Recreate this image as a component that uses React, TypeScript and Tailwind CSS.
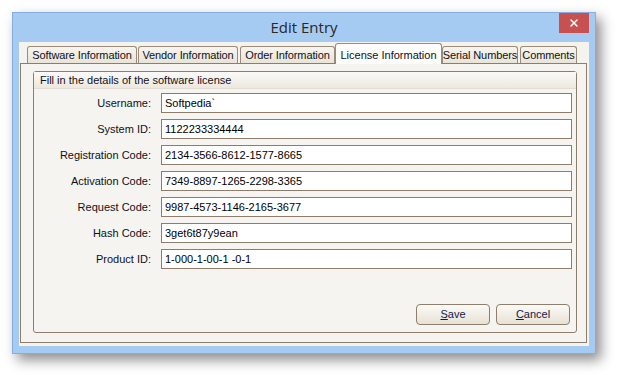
import { X } from "lucide-react";

const tabs = [
  { label: "Software Information", w: "w-[110px]", ml: "ml-[7px]" },
  { label: "Vendor Information", w: "w-[100px]", ml: "ml-px" },
  { label: "Order Information", w: "w-[95px]", ml: "ml-[2px]" },
  { label: "License Information", w: "w-[107px]", ml: "ml-0", active: true },
  { label: "Serial Numbers", w: "w-[76px]", ml: "ml-0" },
  { label: "Comments", w: "w-[57px]", ml: "ml-[2px]" },
];

const fields = [
  ["Username:", "Softpedia`"],
  ["System ID:", "1122233334444"],
  ["Registration Code:", "2134-3566-8612-1577-8665"],
  ["Activation Code:", "7349-8897-1265-2298-3365"],
  ["Request Code:", "9987-4573-1146-2165-3677"],
  ["Hash Code:", "3get6t87y9ean"],
  ["Product ID:", "1-000-1-00-1 -0-1"],
];

function Tab({ label, w, ml, active }: { label: string; w: string; ml: string; active?: boolean }) {
  if (active) {
    return (
      <div
        className={`${w} ${ml} relative z-10 -mb-px flex h-[21px] items-start justify-center whitespace-nowrap rounded-t-[3px] border border-b-0 border-[#9c8b78] bg-[#fcfcfb] pt-[3px] text-[11px] text-[#101020]`}
      >
        {label}
      </div>
    );
  }
  return (
    <div
      className={`${w} ${ml} flex h-[17px] items-center justify-center whitespace-nowrap rounded-t-[3px] border border-b-0 border-[#9c8b78] bg-gradient-to-b from-[#f7f5f0] to-[#e9e4d7] text-[11px] tracking-[-0.1px] text-[#101020]`}
    >
      {label}
    </div>
  );
}

function Button({ first, rest }: { first: string; rest: string }) {
  return (
    <button className="flex h-[21px] w-[74px] items-center justify-center rounded-[4px] border border-[#8f7e6b] bg-gradient-to-b from-[#fbfaf7] to-[#e8e2d4] text-[11px] text-[#141a4a]">
      <span className="underline underline-offset-[1px]">{first}</span>
      {rest}
    </button>
  );
}

export default function App() {
  return (
    <div
      className="h-[375px] w-[617px] overflow-hidden bg-white pl-[12px] pt-[12px]"
      style={{ fontFamily: '"Liberation Sans", Arial, sans-serif' }}
    >
      <div className="relative flex h-[342px] w-[584px] flex-col border border-[#86ade0] bg-[#a5cbf3] px-[6px] pb-[7px] shadow-[5px_6px_12px_rgba(0,0,0,0.45)]">
        <div className="flex h-[29px] items-center justify-center">
          <span
            className="text-[15px] text-[#2b2722]"
            style={{ fontFamily: '"Open Sans", "Noto Sans", sans-serif' }}
          >
            Edit Entry
          </span>
          <div className="absolute right-[6px] top-0 flex h-[20px] w-[30px] items-center justify-center bg-[#c75050]">
            <X size={12} strokeWidth={3} className="text-white" />
          </div>
        </div>

        <div className="flex h-[304px] w-[570px] flex-col bg-[#f4f3ee] pl-px pt-px">
          <div className="flex h-[20px] items-end">
            {tabs.map((t) => (
              <Tab key={t.label} {...t} />
            ))}
          </div>

          <div className="h-[280px] w-[567px] border border-[#8f7d6a] bg-[#f5f4f0] pl-[12px] pt-[7px]">
            <div className="flex h-[262px] w-[544px] flex-col rounded-[3px] border border-[#8f7d6a] pb-[7px]">
              <div className="flex h-[17px] items-center border-b border-[#e2ddd2] bg-gradient-to-b from-[#fbfaf8] to-[#ece8df] pl-[6px] text-[11px] text-[#101020]">
                Fill in the details of the software license
              </div>

              <div className="mt-[4px] flex flex-col gap-[6px]">
                {fields.map(([label, value]) => (
                  <div key={label} className="flex items-center">
                    <div className="w-[117px] text-right text-[11px] text-[#101020]">{label}</div>
                    <div className="ml-[10px] flex h-[20px] w-[411px] items-center border border-[#8f7d6a] bg-white pl-[3px] text-[11px] text-black">
                      {value}
                    </div>
                  </div>
                ))}
              </div>

              <div className="mt-auto flex justify-end gap-[6px] pr-[6px]">
                <Button first="S" rest="ave" />
                <Button first="C" rest="ancel" />
              </div>
            </div>
          </div>
        </div>
      </div>
    </div>
  );
}
